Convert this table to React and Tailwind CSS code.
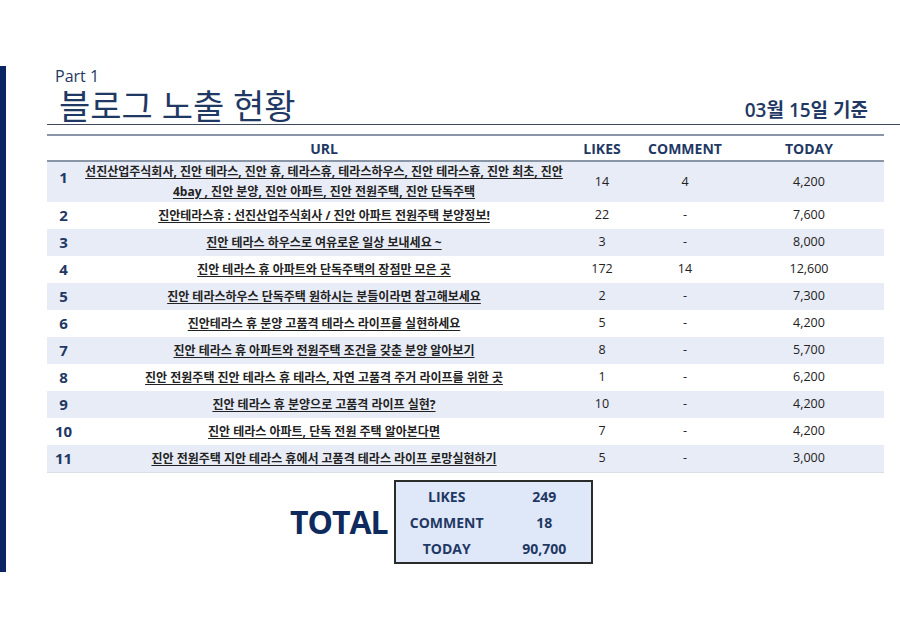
const rows = [
  { no: 1, lines: ['선진산업주식회사, 진안 테라스, 진안 휴, 테라스휴, 테라스하우스, 진안 테라스휴, 진안 최초, 진안', '4bay , 진안 분양, 진안 아파트, 진안 전원주택, 진안 단독주택'], likes: '14', comment: '4', today: '4,200' },
  { no: 2, lines: ['진안테라스휴 : 선진산업주식회사 / 진안 아파트 전원주택 분양정보!'], likes: '22', comment: '-', today: '7,600' },
  { no: 3, lines: ['진안 테라스 하우스로 여유로운 일상 보내세요 ~'], likes: '3', comment: '-', today: '8,000' },
  { no: 4, lines: ['진안 테라스 휴 아파트와 단독주택의 장점만 모은 곳'], likes: '172', comment: '14', today: '12,600' },
  { no: 5, lines: ['진안 테라스하우스 단독주택 원하시는 분들이라면 참고해보세요'], likes: '2', comment: '-', today: '7,300' },
  { no: 6, lines: ['진안테라스 휴 분양 고품격 테라스 라이프를 실현하세요'], likes: '5', comment: '-', today: '4,200' },
  { no: 7, lines: ['진안 테라스 휴 아파트와 전원주택 조건을 갖춘 분양 알아보기'], likes: '8', comment: '-', today: '5,700' },
  { no: 8, lines: ['진안 전원주택 진안 테라스 휴 테라스, 자연 고품격 주거 라이프를 위한 곳'], likes: '1', comment: '-', today: '6,200' },
  { no: 9, lines: ['진안 테라스 휴 분양으로 고품격 라이프 실현?'], likes: '10', comment: '-', today: '4,200' },
  { no: 10, lines: ['진안 테라스 아파트, 단독 전원 주택 알아본다면'], likes: '7', comment: '-', today: '4,200' },
  { no: 11, lines: ['진안 전원주택 지안 테라스 휴에서 고품격 테라스 라이프 로망실현하기'], likes: '5', comment: '-', today: '3,000' },
];

const totals = [
  ['LIKES', '249'],
  ['COMMENT', '18'],
  ['TODAY', '90,700'],
];

const cols = 'grid grid-cols-[33px_488px_68px_98px_150px]';

function Row({ row, shaded }) {
  const tall = row.lines.length > 1;
  return (
    <div className={`${cols} ${tall ? 'h-[40px]' : 'h-[27px]'} ${shaded ? 'bg-[#e8ecf6]' : 'bg-white'} items-center`}>
      <div className={`text-center text-[15px] font-bold text-[#1f3864] ${tall ? 'self-start pt-[4px]' : ''}`}>
        {row.no}
      </div>
      <div className="text-center text-[12px] font-bold text-[#222] leading-[20px] whitespace-nowrap">
        {row.lines.map((l, i) => (
          <div key={i}>
            <span className="underline underline-offset-2">{l}</span>
          </div>
        ))}
      </div>
      <div className="text-center text-[12.5px] text-[#222]">{row.likes}</div>
      <div className="text-center text-[12.5px] text-[#222]">{row.comment}</div>
      <div className="text-center text-[12.5px] text-[#222]">{row.today}</div>
    </div>
  );
}

export default function App() {
  return (
    <div
      className="w-[900px] h-[636px] bg-white flex overflow-hidden"
      style={{ fontFamily: "'Open Sans', 'Noto Sans CJK KR', sans-serif" }}
    >
      <div className="w-[6px] h-[506px] mt-[66px] bg-[#0b2463] shrink-0" />

      <div className="flex-1 pl-[41px] pt-[66px]">
        <div className="pl-[8px] text-[16px] leading-[20px] text-[#1f3864]">Part 1</div>

        <div className="flex items-end justify-between pr-[32px] h-[38px]">
          <div className="pl-[12px] text-[34px] leading-[36px] text-[#1f3864]">블로그 노출 현황</div>
          <div className="text-[19px] font-semibold leading-[24px] text-[#1f3864] pb-[2px]">03월 15일 기준</div>
        </div>
        <div className="h-[1px] bg-[#3d4a5c]" />

        <div className="w-[837px] mt-[9px]">
          <div className={`${cols} h-[28px] border-y-2 border-[#8a95a5] items-center text-[14px] font-bold text-[#1f3864]`}>
            <div />
            <div className="text-center">URL</div>
            <div className="text-center">LIKES</div>
            <div className="text-center">COMMENT</div>
            <div className="text-center">TODAY</div>
          </div>
          {rows.map((r, i) => (
            <Row key={r.no} row={r} shaded={i % 2 === 0} />
          ))}
          <div className="h-[1px] bg-[#dcdfe5]" />
        </div>

        <div className="flex items-center mt-[7px] ml-[243px]">
          <div className="text-[32px] font-bold tracking-[-1px] text-[#0f2a5c] mr-[6px] leading-none">TOTAL</div>
          <div className="w-[199px] border-2 border-[#2b2b2b] bg-[#dfe8f8] py-[1px]">
            {totals.map(([k, v]) => (
              <div key={k} className="grid grid-cols-[102px_93px] h-[26px] items-center text-[14px] font-bold text-[#1f3864]">
                <div className="text-center">{k}</div>
                <div className="text-center">{v}</div>
              </div>
            ))}
          </div>
        </div>
      </div>
    </div>
  );
}
